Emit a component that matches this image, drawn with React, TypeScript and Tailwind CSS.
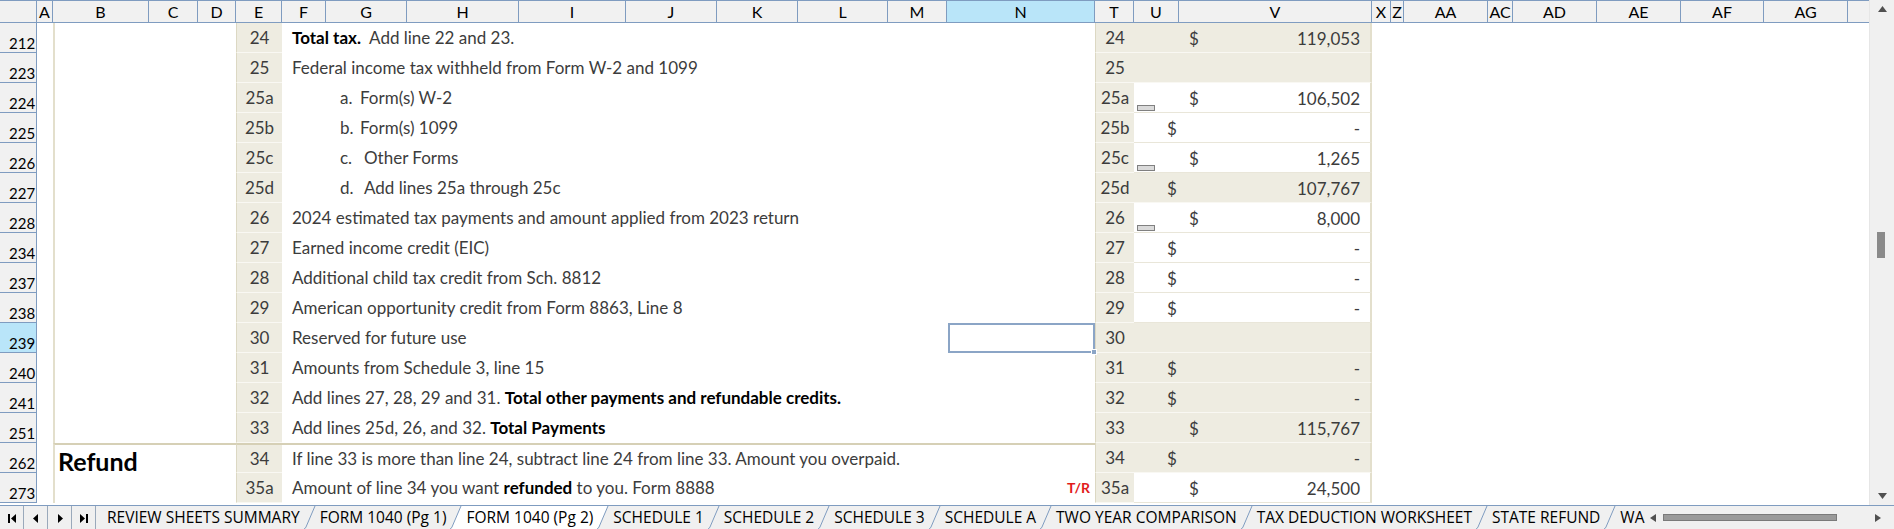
import React from 'react';

const cols = ['', 'A', 'B', 'C', 'D', 'E', 'F', 'G', 'H', 'I', 'J', 'K', 'L', 'M', 'N', 'T', 'U', 'V', 'X', 'Z', 'AA', 'AC', 'AD', 'AE', 'AF', 'AG', ''];

type Row = {
  n: string;
  ln: string;
  text?: React.ReactNode;
  sub?: string;
  subW?: string;
  bg: 'tan' | 'white';
  dollar?: 'l' | 'r';
  val?: string;
  box?: boolean;
  selected?: boolean;
  refund?: boolean;
  tr?: boolean;
};

const rows: Row[] = [
  { n: '212', ln: '24', text: <><b className="font-bold text-black">Total tax.</b>&nbsp; Add line 22 and 23.</>, bg: 'tan', dollar: 'r', val: '119,053' },
  { n: '223', ln: '25', text: 'Federal income tax withheld from Form W-2 and 1099', bg: 'tan' },
  { n: '224', ln: '25a', sub: 'a.', text: 'Form(s) W-2', bg: 'white', dollar: 'r', val: '106,502', box: true },
  { n: '225', ln: '25b', sub: 'b.', text: 'Form(s) 1099', bg: 'white', dollar: 'l', val: '-' },
  { n: '226', ln: '25c', sub: 'c.', subW: 'w', text: 'Other Forms', bg: 'white', dollar: 'r', val: '1,265', box: true },
  { n: '227', ln: '25d', sub: 'd.', subW: 'w', text: 'Add lines 25a through 25c', bg: 'tan', dollar: 'l', val: '107,767' },
  { n: '228', ln: '26', text: '2024 estimated tax payments and amount applied from 2023 return', bg: 'white', dollar: 'r', val: '8,000', box: true },
  { n: '234', ln: '27', text: 'Earned income credit (EIC)', bg: 'white', dollar: 'l', val: '-' },
  { n: '237', ln: '28', text: 'Additional child tax credit from Sch. 8812', bg: 'white', dollar: 'l', val: '-' },
  { n: '238', ln: '29', text: 'American opportunity credit from Form 8863, Line 8', bg: 'white', dollar: 'l', val: '-' },
  { n: '239', ln: '30', text: 'Reserved for future use', bg: 'tan', selected: true },
  { n: '240', ln: '31', text: 'Amounts from Schedule 3, line 15', bg: 'tan', dollar: 'l', val: '-' },
  { n: '241', ln: '32', text: <>Add lines 27, 28, 29 and 31. <b className="font-bold text-black">Total other payments and refundable credits.</b></>, bg: 'tan', dollar: 'l', val: '-' },
  { n: '251', ln: '33', text: <>Add lines 25d, 26, and 32. <b className="font-bold text-black">Total Payments</b></>, bg: 'tan', dollar: 'r', val: '115,767' },
  { n: '262', ln: '34', text: 'If line 33 is more than line 24, subtract line 24 from line 33. Amount you overpaid.', bg: 'tan', dollar: 'l', val: '-', refund: true },
  { n: '273', ln: '35a', text: <>Amount of line 34 you want <b className="font-bold text-black">refunded</b> to you. Form 8888</>, bg: 'white', dollar: 'r', val: '24,500', tr: true },
];

const tabs = [
  'REVIEW SHEETS SUMMARY',
  'FORM 1040 (Pg 1)',
  'FORM 1040 (Pg 2)',
  'SCHEDULE 1',
  'SCHEDULE 2',
  'SCHEDULE 3',
  'SCHEDULE A',
  'TWO YEAR COMPARISON',
  'TAX DEDUCTION WORKSHEET',
  'STATE REFUND',
];

function Sep({ leftWhite, rightWhite }: { leftWhite?: boolean; rightWhite?: boolean }) {
  return (
    <svg width="12" height="24" viewBox="0 0 12 24" className="shrink-0">
      {leftWhite && <polygon points="0,0 11,0 1,23 0,23" fill="#ffffff" />}
      {rightWhite && <polygon points="11,0 12,0 12,23 1,23" fill="#ffffff" />}
      <path d="M11 0 L2 21 Q1 23 0 23" stroke="#7f9cc0" strokeWidth="1" fill="none" />
    </svg>
  );
}

export default function App() {
  return (
    <div className="w-[1894px] h-[529px] bg-white overflow-hidden flex flex-col" style={{ fontFamily: 'Lato, "Open Sans", sans-serif' }}>
      <div className="flex h-[505px] overflow-hidden">
        <div className="grid grid-cols-[37px_16px_96px_49px_38px_46px_44px_81px_112px_107px_91px_81px_90px_59px_148px_39px_45px_193px_19px_13px_84px_25px_84px_84px_83px_84px_21px] grid-rows-[23px_repeat(16,30px)] w-[1869px] content-start">
          {/* header */}
          {cols.map((c, i) => (
            <div
              key={'h' + i}
              className={
                'h-[23px] border-t border-b border-[#7f9cc0] flex items-center justify-center text-[16px] text-black leading-none ' +
                (i < cols.length - 1 ? 'border-r ' : '') +
                (c === 'N' ? 'bg-[#b9e5f9]' : 'bg-[#f1f1f1]')
              }
            >
              {c}
            </div>
          ))}
          {rows.map((r) => {
            const tan = r.bg === 'tan';
            const topB = r.refund ? 'border-t-2 border-t-[#d6d0b6] ' : '';
            return (
              <React.Fragment key={r.n}>
                <div
                  className={
                    'border-r border-b border-[#7f9cc0] flex items-end pl-[9px] text-[15px] leading-none text-black ' +
                    (r.selected ? 'bg-[#b9e5f9]' : 'bg-[#f1f1f1]')
                  }
                >
                  <span className="pb-[1px]">{r.n}</span>
                </div>
                <div className="bg-white" />
                <div className={'col-span-3 bg-white border-l-2 border-l-[#e3dfcc] flex items-center pl-[3px] ' + topB}>
                  {r.refund && <span className="text-[25px] font-bold text-black leading-none pt-[4px]">Refund</span>}
                </div>
                <div className={'bg-[#eeece1] border-l border-l-[#dcd8c3] border-b border-b-[#f9f8f3] flex items-center justify-center text-[17px] text-[#3c3c3c] ' + topB}>
                  {r.ln}
                </div>
                <div className={'col-span-9 relative flex items-center text-[17px] text-[#3c3c3c] whitespace-nowrap ' + (r.sub ? 'pl-[58px] ' : 'pl-[10px] ') + topB}>
                  {r.sub && <span className={r.subW ? 'w-[24px]' : 'w-[20px]'}>{r.sub}</span>}
                  <span>{r.text}</span>
                  {r.selected && (
                    <div className="absolute left-[666px] top-0 w-[147px] h-[30px] border-2 border-[#8ba5c6]">
                      <div className="absolute right-[-4px] bottom-[-4px] w-[6px] h-[6px] bg-[#8ba5c6] border border-white" />
                    </div>
                  )}
                  {r.tr && (
                    <span className="absolute right-[5px] top-[8px] text-[14px] font-bold text-[#e21b1b] leading-none">T/R</span>
                  )}
                </div>
                <div className="bg-[#eeece1] border-l border-l-[#dcd8c3] border-b border-b-[#f9f8f3] flex items-center justify-center text-[17px] text-[#3c3c3c]">
                  {r.ln}
                </div>
                <div
                  className={
                    'col-span-2 relative flex items-center text-[17px] text-[#3c3c3c] border-r-2 border-r-[#e3dfcc] border-b ' +
                    (tan ? 'bg-[#eeece1] border-b-[#f9f8f3]' : 'bg-white border-b-[#e9e6d9]')
                  }
                >
                  {r.dollar && (
                    <span className={'absolute top-[3px] ' + (r.dollar === 'l' ? 'left-[33px]' : 'left-[55px]')}>$</span>
                  )}
                  {r.val && <span className="absolute right-[10px] top-[3px]">{r.val}</span>}
                  {r.box && <div className="absolute left-[3px] bottom-[1px] w-[18px] h-[6px] bg-[#dadada] border border-[#808080]" />}
                </div>
                <div className="col-span-9 bg-white" />
              </React.Fragment>
            );
          })}
        </div>
        {/* vertical scrollbar */}
        <div className="w-[25px] h-[505px] bg-[#f0f0f0] border-l border-[#e6e6e6] flex flex-col items-center justify-between py-[6px]">
          <svg width="9" height="6" viewBox="0 0 9 6"><polygon points="4.5,0 9,6 0,6" fill="#505050" /></svg>
          <div className="flex-1 w-full relative">
            <div className="absolute left-[7px] top-[220px] w-[8px] h-[26px] bg-[#8a8a8a]" />
          </div>
          <svg width="9" height="6" viewBox="0 0 9 6"><polygon points="0,0 9,0 4.5,6" fill="#505050" /></svg>
        </div>
      </div>
      {/* tab bar */}
      <div className="h-[24px] border-t border-[#7f9cc0] bg-[#f0f0f0] flex items-stretch text-[15.5px] text-black whitespace-nowrap overflow-hidden" style={{ fontFamily: '"Open Sans", Lato, sans-serif' }}>
        <div className="flex items-stretch w-[96px] shrink-0">
          {[0, 1, 2, 3].map((i) => (
            <div key={i} className="w-[24px] flex items-center justify-center border-r border-[#9aa9bb]">
              <svg width="12" height="12" viewBox="0 0 12 12">
                {i === 0 && (<><rect x="2" y="2" width="2" height="9" fill="#000" /><polygon points="10,2 10,11 5,6.5" fill="#000" /></>)}
                {i === 1 && <polygon points="8,2 8,11 3,6.5" fill="#000" />}
                {i === 2 && <polygon points="4,2 4,11 9,6.5" fill="#000" />}
                {i === 3 && (<><polygon points="2,2 2,11 7,6.5" fill="#000" /><rect x="8" y="2" width="2" height="9" fill="#000" /></>)}
              </svg>
            </div>
          ))}
        </div>
        <div className="flex items-stretch w-[1549px] shrink-0 overflow-hidden pl-[7px]">
          {tabs.map((t, i) => (
            <React.Fragment key={t}>
              <div className={'flex items-center px-[4px] ' + (i === 2 ? 'bg-white' : '')}>
                <span className="leading-none">{t}</span>
              </div>
              <Sep leftWhite={i === 2} rightWhite={i === 1} />
            </React.Fragment>
          ))}
          <div className="flex items-center pl-[4px]"><span className="leading-none">WAGES</span></div>
        </div>
        <div className="flex items-center w-[249px] shrink-0 bg-[#f0f0f0] pl-[5px] relative">
          <svg width="6" height="8" viewBox="0 0 6 8" className="shrink-0"><polygon points="6,0 6,8 0,4" fill="#505050" /></svg>
          <div className="ml-[7px] w-[174px] h-[7px] bg-[#9a9a9a] border border-[#7a7a7a]" />
          <div className="flex-1" />
          <svg width="6" height="8" viewBox="0 0 6 8" className="mr-[13px] shrink-0"><polygon points="0,0 0,8 6,4" fill="#505050" /></svg>
        </div>
      </div>
    </div>
  );
}
